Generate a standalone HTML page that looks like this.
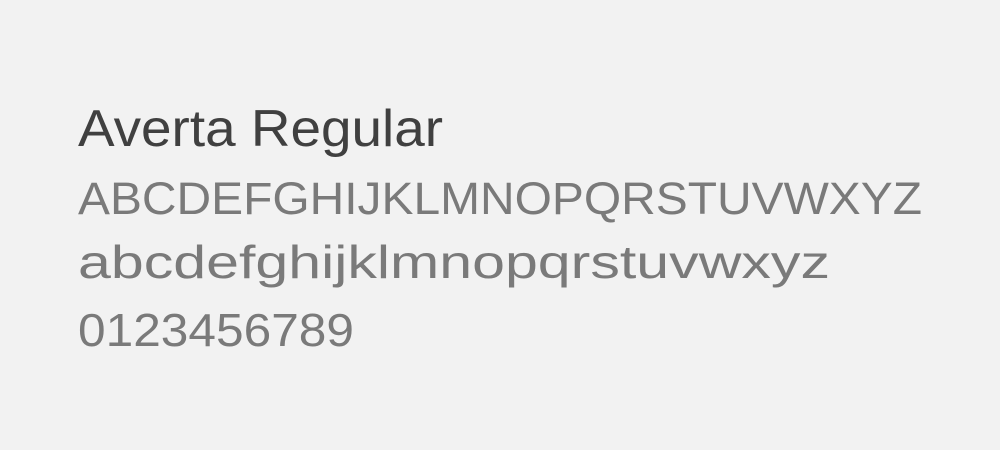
<!DOCTYPE html>
<html><head><meta charset="utf-8"><style>
html,body{margin:0;padding:0;background:#f2f2f2;}
svg{display:block}
</style></head><body>
<svg width="1000" height="450" xmlns="http://www.w3.org/2000/svg">
<rect width="1000" height="450" fill="#f2f2f2"/>
<g font-family="Liberation Sans, sans-serif">
<text x="78" y="146" font-size="52" fill="#404040" textLength="365" lengthAdjust="spacingAndGlyphs">Averta Regular</text>
<text x="78" y="214" font-size="45" fill="#7a7a7a" textLength="844" lengthAdjust="spacingAndGlyphs">ABCDEFGHIJKLMNOPQRSTUVWXYZ</text>
<text x="78" y="278" font-size="46" fill="#7a7a7a" textLength="752" lengthAdjust="spacingAndGlyphs">abcdefghijklmnopqrstuvwxyz</text>
<text x="78" y="346" font-size="46" fill="#7a7a7a" textLength="276" lengthAdjust="spacingAndGlyphs">0123456789</text>
</g>
</svg>
</body></html>
